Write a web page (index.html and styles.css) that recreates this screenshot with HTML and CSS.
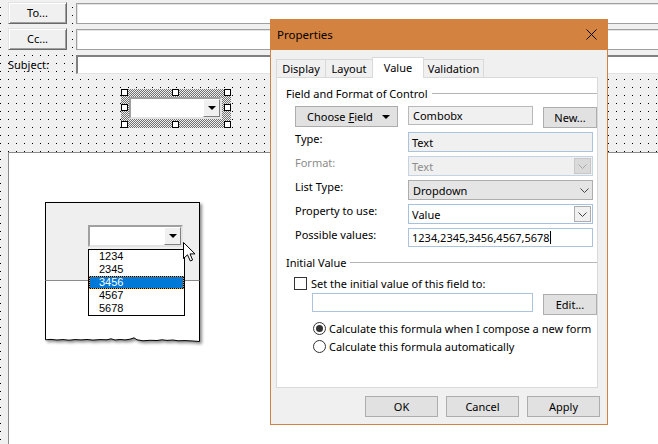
FILE: index.html
```html
<!DOCTYPE html>
<html>
<head>
    <title>Properties</title>
    <link rel="stylesheet" href="styles.css">
</head>
<body>
    <div class="form">
        <div class="addr-row">
            <div class="btn3d">To...</div>
            <div class="field"></div>
        </div>
        <div class="addr-row">
            <div class="btn3d">Cc...</div>
            <div class="field"></div>
        </div>
        <div class="addr-row subject-row">
            <div class="subject-label">Subject:</div>
            <div class="field sunken"></div>
        </div>

        <div class="design">
            <div class="sel-frame">
                <span class="handle h-tl"></span>
                <span class="handle h-tc"></span>
                <span class="handle h-tr"></span>
                <span class="handle h-ml"></span>
                <span class="handle h-mr"></span>
                <span class="handle h-bl"></span>
                <span class="handle h-bc"></span>
                <span class="handle h-br"></span>
                <div class="combo">
                    <span class="combo-btn"><span class="tri"></span></span>
                </div>
            </div>
        </div>

        <div class="canvas">
            <div class="snap">
                <div class="paper">
                    <div class="paper-top">
                        <div class="combo combo-snap">
                            <span class="combo-btn"><span class="tri"></span></span>
                        </div>
                    </div>
                    <div class="paper-bottom"></div>
                    <svg class="torn" width="155" height="10" viewBox="0 0 155 10">
                        <path d="M0 0 H155 V8.5 L148 8 L140 7.6 L133 7.8 L128 7 L122 7.4 L117 6.8 L112 7.5 L105 7.3 L98 7.8 L92 6.8 L89 4.8 L87 5.6 L84 6.4 L80 6.9 L75 6.5 L70 7 L66 5.8 L62 6.8 L55 6.6 L48 7.1 L42 6.5 L36 6.9 L30 6.6 L24 7.2 L18 6.6 L12 7 L6 6.4 L0 6.8 Z" fill="#fff"/>
                        <path d="M0.5 0 V6.8 L6 6.4 L12 7 L18 6.6 L24 7.2 L30 6.6 L36 6.9 L42 6.5 L48 7.1 L55 6.6 L62 6.8 L66 5.8 L70 7 L75 6.5 L80 6.9 L84 6.4 L87 5.6 L89 4.8 L92 6.8 L98 7.8 L105 7.3 L112 7.5 L117 6.8 L122 7.4 L128 7 L133 7.8 L140 7.6 L148 8 L154.5 8.5 V0" fill="none" stroke="#000" stroke-width="1"/>
                    </svg>
                </div>
                <ul class="droplist">
                    <li>1234</li>
                    <li>2345</li>
                    <li class="picked">3456</li>
                    <li>4567</li>
                    <li>5678</li>
                </ul>
                <svg class="cursor" width="13" height="21" viewBox="0 0 13 21">
                    <path d="M0.5 0.5 V16.5 L4.5 12.8 L7.3 19 L9.6 18 L7 11.9 L12 11.9 Z" fill="#fff" stroke="#000" stroke-width="1" stroke-linejoin="round"/>
                </svg>
            </div>
        </div>
    </div>

    <div class="dialog">
        <div class="titlebar">
            <span>Properties</span>
            <svg width="11" height="11" viewBox="0 0 11 11"><path d="M0.5 0.5 L10.5 10.5 M10.5 0.5 L0.5 10.5" stroke="#000" stroke-width="1"/></svg>
        </div>
        <div class="dlg-body">
            <div class="tabs">
                <div class="tab tab-display">Display</div>
                <div class="tab tab-layout">Layout</div>
                <div class="tab tab-value active">Value</div>
                <div class="tab tab-validation">Validation</div>
            </div>
            <div class="panel">
                <div class="group-head"><span>Field and Format of Control</span><i></i></div>

                <div class="choose-row">
                    <div class="btn choose-btn"><span>Choose <u>F</u>ield</span><span class="tri"></span></div>
                    <div class="box readonly name-box">Combobx</div>
                    <div class="btn new-btn">New...</div>
                </div>

                <div class="props">
                    <div class="lbl">Type:</div>
                    <div class="box type-box">Text</div>

                    <div class="lbl dim">Format:</div>
                    <div class="box format-box">
                        <span>Text</span>
                        <span class="dd-btn off"><svg width="9" height="5" viewBox="0 0 9 5"><polyline points="0.5,0.5 4.5,4.5 8.5,0.5" fill="none" stroke="#a8a8a8"/></svg></span>
                    </div>

                    <div class="lbl">List Type:</div>
                    <div class="box list-box">
                        <span>Dropdown</span>
                        <svg class="chev" width="9" height="5" viewBox="0 0 9 5"><polyline points="0.5,0.5 4.5,4.5 8.5,0.5" fill="none" stroke="#444"/></svg>
                    </div>

                    <div class="lbl">Property to use:</div>
                    <div class="box prop-box">
                        <span>Value</span>
                        <span class="dd-btn"><svg width="9" height="5" viewBox="0 0 9 5"><polyline points="0.5,0.5 4.5,4.5 8.5,0.5" fill="none" stroke="#444"/></svg></span>
                    </div>

                    <div class="lbl">Possible values:</div>
                    <div class="box values-box">1234,2345,3456,4567,5678<span class="caret"></span></div>
                </div>

                <div class="group-head initial-head"><span>Initial Value</span><i></i></div>

                <div class="check-row">
                    <span class="checkbox"></span>
                    <span>Set the initial value of this field to:</span>
                </div>

                <div class="formula-row">
                    <div class="box formula-box"></div>
                    <div class="btn edit-btn">Edit...</div>
                </div>

                <div class="radio-row first">
                    <span class="radio on"></span>
                    <span>Calculate this formula when I compose a new form</span>
                </div>
                <div class="radio-row">
                    <span class="radio"></span>
                    <span>Calculate this formula automatically</span>
                </div>
            </div>

            <div class="dlg-buttons">
                <div class="btn">OK</div>
                <div class="btn">Cancel</div>
                <div class="btn">Apply</div>
            </div>
        </div>
    </div>
</body>
</html>
```

FILE: styles.css
```css
body {
    margin: 0;
    width: 658px;
    height: 444px;
    overflow: hidden;
    position: relative;
    font-family: "Noto Sans", sans-serif;
    font-size: 11px;
    color: #000;
    background-color: #f0f0f0;
    background-image: conic-gradient(at 1px 1px, transparent 75%, #000 0);
    background-size: 8px 8px;
    background-position: 0 7px;
}

/* form behind the dialog */
.form {
    padding-top: 2px;
}

.addr-row {
    display: flex;
    align-items: flex-start;
    height: 22px;
    margin-bottom: 4px;
}

.subject-row {
    height: 19px;
    margin-top: 5px;
    margin-bottom: 0;
}

.btn3d {
    width: 59px;
    height: 22px;
    margin-left: 8px;
    box-sizing: border-box;
    background: #f0f0f0;
    border: 1px solid;
    border-color: #e3e3e3 #696969 #696969 #e3e3e3;
    box-shadow: inset 1px 1px 0 #fff, inset -1px -1px 0 #a0a0a0;
    display: flex;
    align-items: center;
    justify-content: center;
    padding-bottom: 1px;
}

.field {
    flex: 1;
    height: 21px;
    margin: 1px -20px 0 9px;
    box-sizing: border-box;
    background: #fff;
    border: 1px solid #a0a0a0;
    box-shadow: inset 1px 1px 0 #e3e3e3;
}

.subject-label {
    width: 68px;
    margin-left: 8px;
    line-height: 19px;
}

.field.sunken {
    margin: 0 -20px 0 0;
    height: 19px;
    border-width: 2px 0 1px 2px;
    border-color: #808080 #fff #e3e3e3 #808080;
    box-shadow: none;
}

/* design surface with the selected control */
.design {
    height: 78px;
    box-sizing: border-box;
    padding-top: 15px;
}

.sel-frame {
    position: relative;
    width: 110px;
    height: 39px;
    margin-left: 121px;
    box-sizing: border-box;
    padding: 8px 9px 9px 8px;
    background: repeating-conic-gradient(#707070 0 25%, #f0f0f0 0 50%) 0 0 / 2px 2px;
}

.handle {
    position: absolute;
    width: 7px;
    height: 7px;
    box-sizing: border-box;
    background: #fff;
    border: 1px solid #000;
}

.h-tl { left: 0; top: 0; }
.h-tc { left: 51px; top: 0; }
.h-tr { right: 0; top: 0; }
.h-ml { left: 0; top: 15px; }
.h-mr { right: 0; top: 15px; }
.h-bl { left: 0; bottom: 0; }
.h-bc { left: 51px; bottom: 0; }
.h-br { right: 0; bottom: 0; }

.combo {
    width: 93px;
    height: 22px;
    box-sizing: border-box;
    background: #fff;
    border: 2px solid;
    border-color: #a0a0a0 #e3e3e3 #e3e3e3 #a0a0a0;
    display: flex;
    justify-content: flex-end;
}

.combo-btn {
    width: 17px;
    height: 18px;
    box-sizing: border-box;
    background: #f0f0f0;
    border: 1px solid;
    border-color: #fff #808080 #808080 #fff;
    display: flex;
    align-items: center;
    justify-content: center;
}

.tri {
    width: 0;
    height: 0;
    border-left: 4px solid transparent;
    border-right: 4px solid transparent;
    border-top: 4px solid #000;
}

/* white canvas with the pasted screenshot */
.canvas {
    height: 292px;
    margin-left: 8px;
    background: #fff;
    border-top: 1px solid #8a8a8a;
    border-left: 1px solid #8a8a8a;
    padding-top: 49px;
    box-sizing: border-box;
}

.snap {
    position: relative;
    width: 155px;
    margin-left: 36px;
}

.paper {
    filter: drop-shadow(2px 2px 1.5px rgba(0, 0, 0, 0.45));
}

.paper-top {
    height: 79px;
    box-sizing: border-box;
    background: #efefef;
    border: 1px solid #000;
    border-bottom: 1px solid #8a8a8a;
    padding: 22px 0 0 42px;
}

.paper-bottom {
    height: 52px;
    background: #fff;
    border-left: 1px solid #000;
    border-right: 1px solid #000;
}

.torn {
    display: block;
}

.combo-snap {
    width: 95px;
}

.droplist {
    position: absolute;
    left: 43px;
    top: 47px;
    width: 97px;
    margin: 0;
    padding: 0;
    list-style: none;
    background: #fff;
    border: 1px solid #000;
    box-sizing: border-box;
    font-family: "Liberation Sans", Arial, sans-serif;
    font-size: 11px;
}

.droplist li {
    height: 13px;
    line-height: 13px;
    padding-left: 10px;
}

.droplist li.picked {
    color: #fff;
    background: #0078d7;
    box-shadow: inset 0 0 0 1px #000;
    outline: 1px dotted #f39a2c;
    outline-offset: -1px;
}

.cursor {
    position: absolute;
    left: 138px;
    top: 40px;
}

/* properties dialog */
.dialog {
    position: absolute;
    left: 270px;
    top: 19px;
    width: 338px;
    height: 406px;
    box-sizing: border-box;
    background: #f0f0f0;
    border: 1px solid #d4823f;
    border-top: none;
}

.titlebar {
    height: 31px;
    margin: 0 -1px;
    padding: 0 11px 0 7px;
    background: #d4823f;
    display: flex;
    align-items: center;
    justify-content: space-between;
    font-size: 11.5px;
}

.dlg-body {
    padding: 7px 0 0 5px;
}

.tabs {
    display: flex;
    align-items: flex-end;
    height: 21px;
    margin-bottom: -1px;
    position: relative;
    z-index: 1;
}

.tab {
    height: 18px;
    margin-bottom: 1px;
    box-sizing: border-box;
    border: 1px solid #d9d9d9;
    border-bottom: none;
    display: flex;
    align-items: center;
    justify-content: center;
    margin-left: -1px;
}

.tab-display { width: 50px; margin-left: 0; }
.tab-layout { width: 48px; }
.tab-value { width: 52px; }
.tab-validation { width: 61px; }

.tab.active {
    height: 21px;
    margin-bottom: 0;
    background: #fff;
    padding-bottom: 2px;
}

.panel {
    width: 322px;
    height: 311px;
    box-sizing: border-box;
    background: #fff;
    border: 1px solid #d9d9d9;
    padding: 7px 0 0 9px;
}

.group-head {
    display: flex;
    align-items: center;
    height: 16px;
}

.group-head i {
    flex: 1;
    height: 1px;
    margin-left: 4px;
    background: #b4b4b4;
}

.btn {
    box-sizing: border-box;
    height: 21px;
    background: #e1e1e1;
    border: 1px solid #adadad;
    display: flex;
    align-items: center;
    justify-content: center;
}

.box {
    box-sizing: border-box;
    height: 20px;
    border: 1px solid #abc3dc;
    background: #fff;
    display: flex;
    align-items: center;
    padding-left: 3px;
}

.choose-row {
    display: flex;
    align-items: flex-start;
    margin: 5px 0 0 9px;
}

.choose-btn {
    width: 103px;
    justify-content: space-between;
    padding: 0 7px 0 11px;
}

.name-box {
    width: 125px;
    height: 19px;
    margin-left: 10px;
    background: #f0f0f0;
    border-color: #b9b9b9;
    padding-left: 4px;
}

.new-btn {
    width: 54px;
    margin: 1px 0 0 10px;
}

.props {
    display: grid;
    grid-template-columns: 113px 185px;
    grid-auto-rows: 20px;
    row-gap: 4px;
    margin: 4px 0 0 9px;
}

.lbl {
    line-height: 14px;
}

.lbl.dim {
    color: #8c8c8c;
}

.type-box {
    background: #f0f0f0;
}

.format-box {
    background: #f0f0f0;
    border-color: #c4d4e4;
    color: #8c8c8c;
    justify-content: space-between;
}

.dd-btn {
    width: 17px;
    height: 16px;
    margin-right: 1px;
    box-sizing: border-box;
    border: 1px solid #adadad;
    background: #f0f0f0;
    display: flex;
    align-items: center;
    justify-content: center;
}

.dd-btn.off {
    background: #dadada;
    border-color: #c8c8c8;
}

.list-box {
    background: #e5e5e5;
    border-color: #adadad;
    justify-content: space-between;
    padding-left: 4px;
    padding-right: 3px;
}

.prop-box {
    border-color: #a5c1df;
    justify-content: space-between;
}

.values-box {
    height: 19px;
}

.caret {
    width: 1px;
    height: 13px;
    background: #000;
}

.initial-head {
    margin-top: 6px;
}

.check-row {
    display: flex;
    align-items: center;
    height: 13px;
    margin: 7px 0 0 8px;
}

.checkbox {
    width: 13px;
    height: 13px;
    box-sizing: border-box;
    border: 1px solid #333;
    background: #fff;
    margin-right: 4px;
}

.formula-row {
    display: flex;
    align-items: flex-start;
    margin: 3px 0 0 26px;
}

.formula-box {
    width: 221px;
    height: 19px;
}

.edit-btn {
    width: 54px;
    margin: 1px 0 0 10px;
}

.radio-row {
    display: flex;
    align-items: center;
    height: 13px;
    margin: 5px 0 0 27px;
}

.radio-row.first {
    margin-top: 7px;
}

.radio {
    width: 13px;
    height: 13px;
    box-sizing: border-box;
    border: 1px solid #333;
    border-radius: 50%;
    background: #fff;
    margin-right: 3px;
    display: flex;
    align-items: center;
    justify-content: center;
}

.radio.on::after {
    content: "";
    width: 7px;
    height: 7px;
    border-radius: 50%;
    background: #333;
}

.dlg-buttons {
    display: flex;
    justify-content: flex-end;
    gap: 8px;
    margin: 8px 7px 0 0;
}

.dlg-buttons .btn {
    width: 73px;
}
```
